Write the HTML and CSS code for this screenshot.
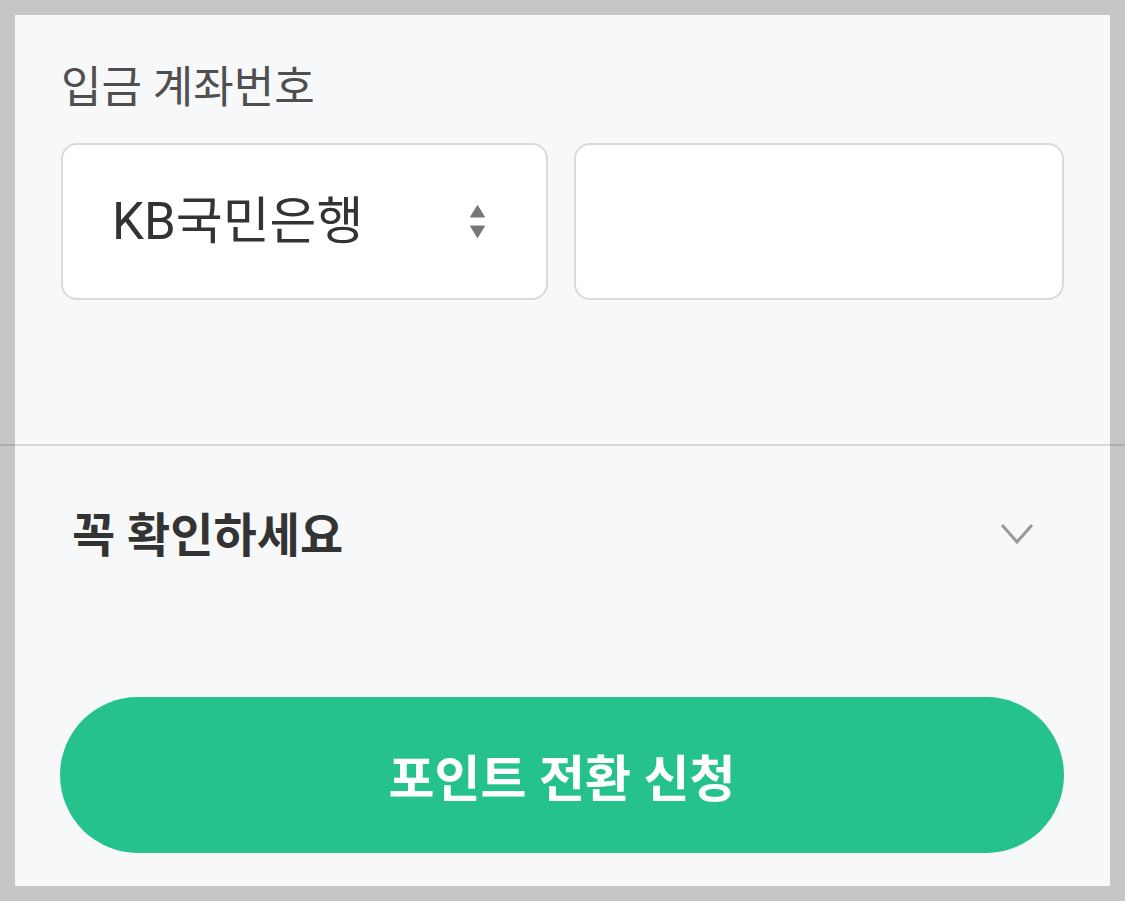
FILE: index.html
```html
<!DOCTYPE html>
<html lang="ko">
<head>
    <meta charset="utf-8">
    <title>포인트 전환 신청</title>
    <link rel="stylesheet" href="styles.css">
</head>
<body>
    <div id="frame">
        <div id="account">
            <div class="field-label">입금 계좌번호</div>
            <div class="account-row">
                <div class="bank-select">
                    <span class="bank-name">KB국민은행</span>
                    <svg class="select-arrows" width="15" height="33" viewBox="0 0 15 33">
                        <path d="M7.5 0.5 L14.5 12 H0.5 Z" fill="#777" stroke="#777" stroke-linejoin="round"/>
                        <path d="M7.5 32.5 L14.5 21 H0.5 Z" fill="#777" stroke="#777" stroke-linejoin="round"/>
                    </svg>
                </div>
                <div class="account-input"></div>
            </div>
        </div>

        <div class="divider"></div>

        <div id="notice">
            <span class="notice-title">꼭 확인하세요</span>
            <svg class="chevron" width="34" height="22" viewBox="0 0 34 22">
                <path d="M2 2 L17 19 L32 2" fill="none" stroke="#9a9a9a" stroke-width="3"/>
            </svg>
        </div>

        <button class="submit-btn" type="button">포인트 전환 신청</button>
    </div>
</body>
</html>
```

FILE: styles.css
```css
html, body {
    height: 100%;
}

body {
    margin: 0;
    padding: 15px;
    box-sizing: border-box;
    background-color: #c5c6c8;
    font-family: Roboto, "Noto Sans CJK KR", sans-serif;
    overflow: hidden;
}

#frame {
    height: 100%;
    display: flex;
    flex-direction: column;
    background-color: #f7f8fa;
}

#account {
    height: 429px;
    box-sizing: border-box;
    padding: 44px 46px 0;
}

.field-label {
    font-size: 44px;
    line-height: 58px;
    color: #4f4f4f;
}

.account-row {
    display: grid;
    grid-template-columns: 487px 490px;
    gap: 26px;
    margin-top: 26px;
}

.bank-select,
.account-input {
    height: 157px;
    box-sizing: border-box;
    border: 2px solid #dadada;
    border-radius: 16px;
    background-color: #fff;
}

.bank-select {
    display: flex;
    align-items: center;
    justify-content: space-between;
    padding: 0 61px 0 49px;
}

.bank-name {
    font-size: 51px;
    padding-bottom: 10px;
    color: #333;
}

.select-arrows {
    display: block;
}

.divider {
    height: 2px;
    margin: 0 -15px;
    background-color: rgba(0, 0, 0, 0.13);
}

#notice {
    height: 176px;
    box-sizing: border-box;
    display: flex;
    align-items: center;
    justify-content: space-between;
    padding: 0 76px 6px 57px;
}

.notice-title {
    font-size: 47px;
    font-weight: bold;
    color: #333;
}

.chevron {
    display: block;
    margin-top: 6px;
}

.submit-btn {
    margin: auto 46px 33px 45px;
    height: 156px;
    border: none;
    border-radius: 78px;
    background-color: #25c38b;
    color: #fff;
    font-family: Roboto, "Noto Sans CJK KR", sans-serif;
    font-size: 50px;
    font-weight: bold;
    cursor: pointer;
}
```
